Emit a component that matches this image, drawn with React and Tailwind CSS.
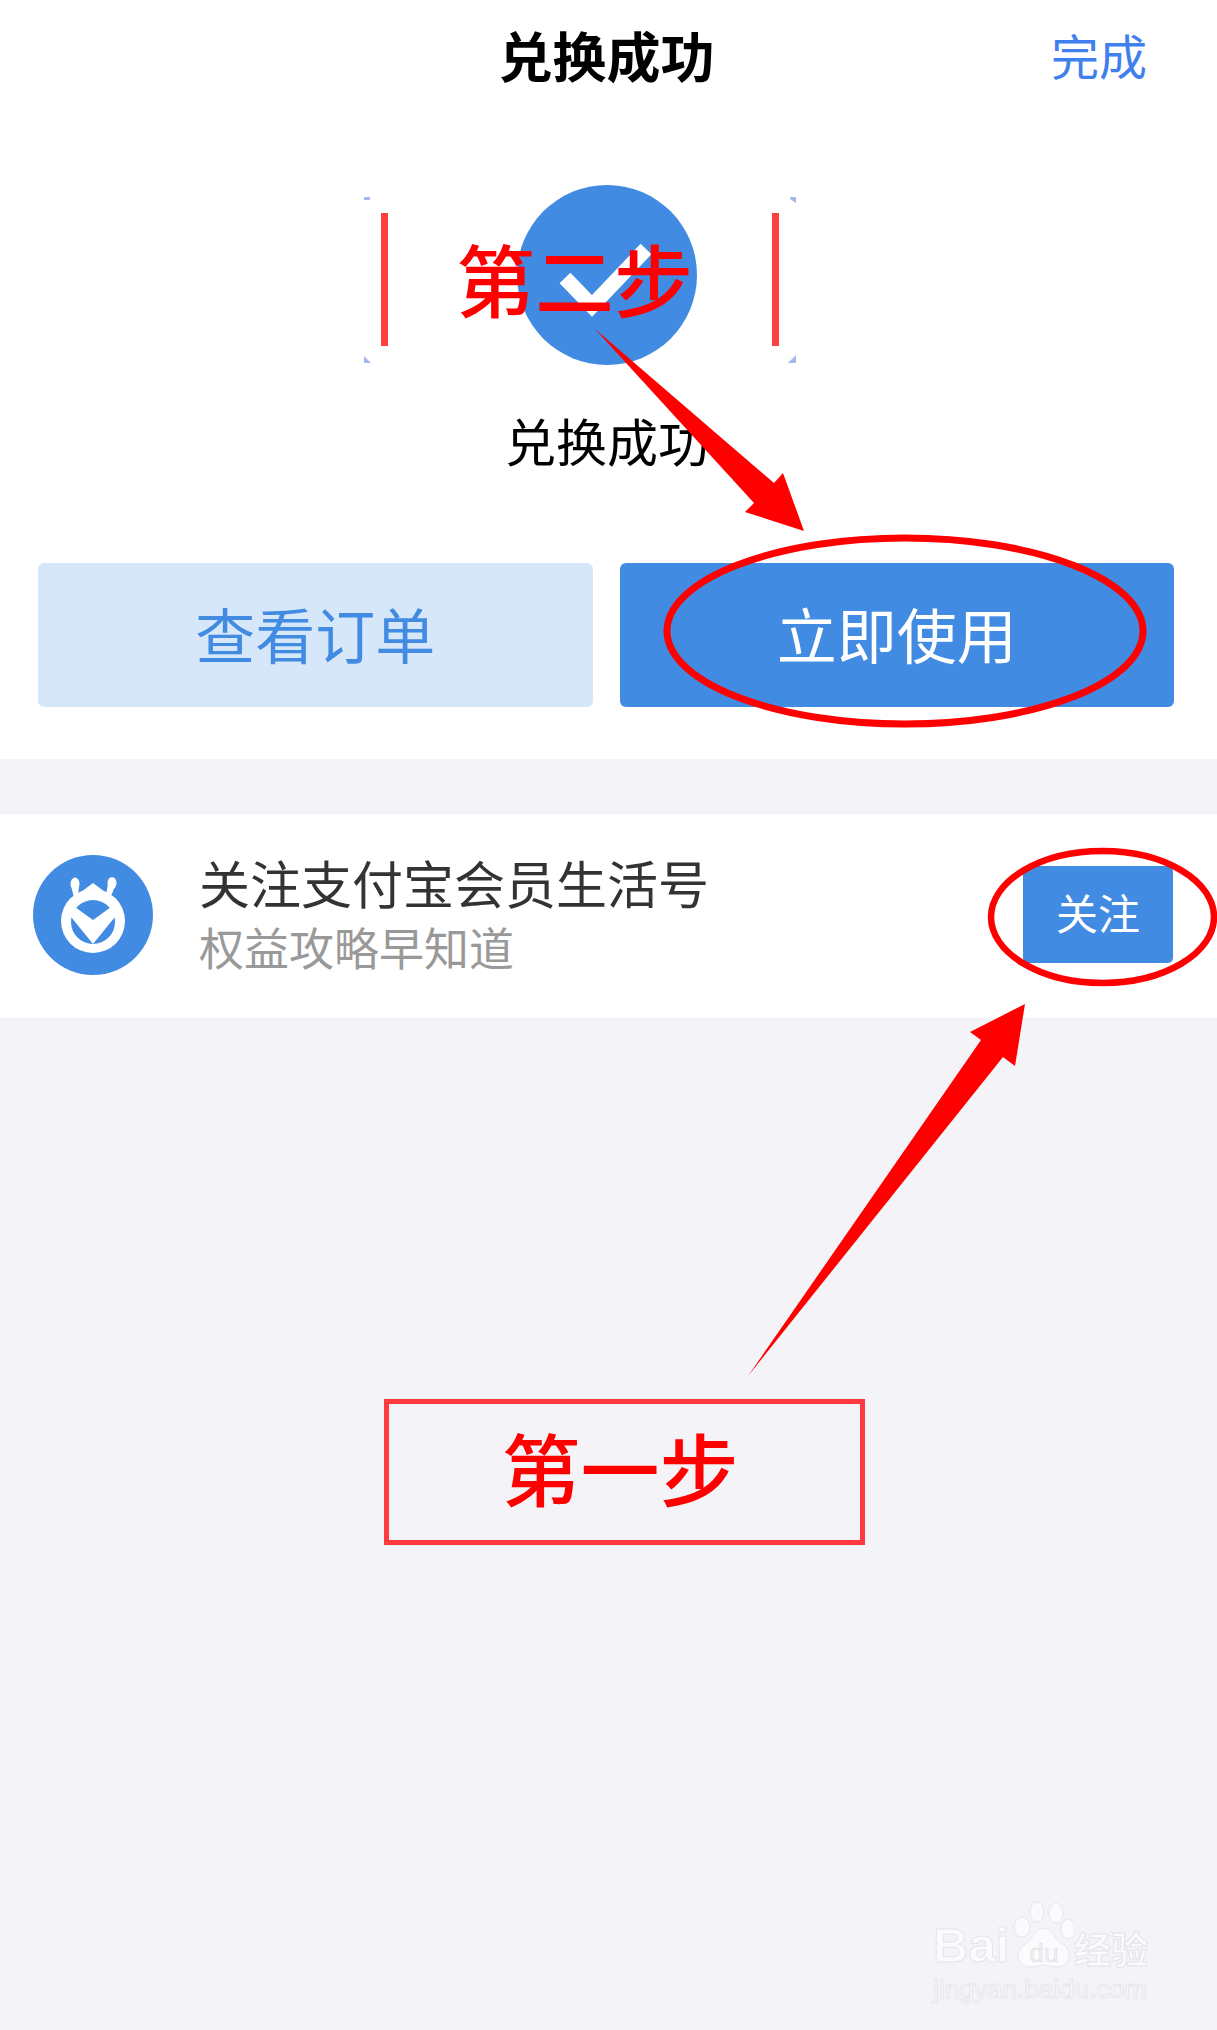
import React from "react";

const cjk = "font-['Noto_Sans_CJK_SC','Noto_Sans',sans-serif]";

function CheckBadge() {
  return (
    <div className="w-[180px] h-[180px] rounded-full bg-[#418be2] mx-auto">
      <svg width="180" height="180" viewBox="0 0 180 180">
        <path d="M48 93 L75 121 L129 64" fill="none" stroke="#fff" strokeWidth="15" />
      </svg>
    </div>
  );
}

function VipLogo() {
  return (
    <svg width="120" height="120" viewBox="0 0 120 120" className="shrink-0">
      <circle cx="60" cy="60" r="60" fill="#418be2" />
      <g fill="#fff">
        <ellipse cx="42" cy="29" rx="4.5" ry="6.5" />
        <path d="M38 30 L41 43 L45 42 L46 30 Z" />
        <ellipse cx="79" cy="28" rx="4.5" ry="6" />
        <path d="M75 29 L73 40 L78 41 L83 29 Z" />
        <path d="M60 28 L36 46 L84 46 Z" />
        <circle cx="60" cy="66" r="32" />
      </g>
      <circle cx="60" cy="67" r="22" fill="#418be2" />
      <polygon
        points="35,47 60,65 85,47 86,57 60,89 34,57"
        fill="#fff"
      />
    </svg>
  );
}

function Annotations() {
  return (
    <svg
      className="absolute left-0 top-0 pointer-events-none"
      width="1217"
      height="2030"
      viewBox="0 0 1217 2030"
    >
      <rect x="381" y="213" width="7" height="133" fill="#ff4040" />
      <rect x="772" y="213" width="7" height="133" fill="#ff4040" />
      <g fill="#a9b6ee">
        <path d="M364 197 h6 v3 h-6 Z" />
        <path d="M796 197 v6 l-6 -4 v-2 Z" />
        <path d="M364 363 v-7 l7 7 Z" />
        <path d="M796 363 v-8 l-8 8 Z" />
      </g>
      <polygon
        points="595,329 774,483 783,473 804,531 745,512 754,503"
        fill="#ff0000"
      />
      <ellipse cx="905" cy="631" rx="238" ry="93" fill="none" stroke="#ff0000" strokeWidth="7" />
      <ellipse cx="1102.5" cy="917" rx="111.5" ry="66" fill="none" stroke="#ff0000" strokeWidth="6.5" />
      <polygon
        points="748,1376 981,1040 970,1032 1025,1004 1015,1066 1003,1057"
        fill="#ff0000"
      />
    </svg>
  );
}

function Watermark() {
  return (
    <div className="absolute left-[933px] top-[1900px] w-[220px] h-[104px]">
      <div className="flex items-end h-[70px]">
        <span className="font-['Liberation_Sans',sans-serif] font-bold text-[49px] leading-[50px] w-[80px] text-[#fbfbfd] [-webkit-text-stroke:1px_#e4e4ea]">
          Bai
        </span>
        <svg width="60" height="70" viewBox="0 0 60 70" className="shrink-0">
          <g fill="#fbfbfd" stroke="#e6e6ec" strokeWidth="1">
            <ellipse cx="9" cy="27" rx="8" ry="10" />
            <ellipse cx="24" cy="12" rx="7" ry="10" />
            <ellipse cx="43" cy="13" rx="7" ry="10" />
            <ellipse cx="55" cy="29" rx="7" ry="10" />
            <path d="M31 28 C40 28 41 40 50 44 C60 50 58 67 44 67 C38 67 35 65 31 65 C27 65 23 67 17 67 C4 67 1 52 11 45 C20 40 21 28 31 28 Z" />
          </g>
          <text
            x="31"
            y="62"
            textAnchor="middle"
            fontFamily="Liberation Sans, sans-serif"
            fontSize="26"
            fill="#f1f1f5"
            stroke="#dcdce2"
            strokeWidth="0.6"
          >
            du
          </text>
        </svg>
        <span className={`${cjk} font-bold text-[37px] leading-[44px] ml-[1px] whitespace-nowrap text-[#fbfbfd] [-webkit-text-stroke:1px_#e4e4ea]`}>
          经验
        </span>
      </div>
      <div className="font-['Liberation_Sans',sans-serif] text-[26.5px] leading-[30px] mt-[4px] whitespace-nowrap text-[#fbfbfd] [-webkit-text-stroke:1px_#e6e6ec]">
        jingyan.baidu.com
      </div>
    </div>
  );
}

export default function App() {
  return (
    <div className={`${cjk} relative w-[1217px] h-[2030px] overflow-hidden bg-[#f3f3f8]`}>
      <div className="bg-white">
        <div className="grid grid-cols-[1fr_auto_1fr] items-center h-[114px] pb-[5px]">
          <div />
          <h1 className="mr-[4px] text-[54px] leading-[60px] font-bold text-black">兑换成功</h1>
          <div className="justify-self-end pr-[70px] pb-[2px] text-[48px] leading-[60px] text-[#3f80ee]">
            完成
          </div>
        </div>

        <div className="pt-[71px] pr-[3px]">
          <CheckBadge />
        </div>
        <p className="mt-[45px] pr-[3px] text-center text-[51px] leading-[60px] text-black">兑换成功</p>

        <div className="grid grid-cols-2 gap-[27px] pl-[38px] pr-[43px] mt-[93px] pb-[52px]">
          <button className="h-[144px] pb-[5px] rounded-[6px] bg-[#d5e7f9] text-[#418be2] text-[60px] leading-none">
            查看订单
          </button>
          <button className="h-[144px] pb-[5px] rounded-[6px] bg-[#418be2] text-white text-[60px] leading-none">
            立即使用
          </button>
        </div>
      </div>

      <div className="flex items-start mt-[55px] h-[204px] bg-white pl-[33px] pr-[44px]">
        <div className="pt-[41px]">
          <VipLogo />
        </div>
        <div className="flex-1 ml-[46px] pt-[37px]">
          <div className="text-[51px] leading-[62px] text-[#333333]">关注支付宝会员生活号</div>
          <div className="text-[45px] leading-[68px] text-[#999999]">权益攻略早知道</div>
        </div>
        <button className="mt-[52px] pb-[6px] w-[150px] h-[97px] rounded-[5px] bg-[#418be2] text-white text-[42px] leading-none">
          关注
        </button>
      </div>

      <Annotations />

      <div className="absolute left-[456px] top-[223px] text-[79px] leading-[110px] font-medium text-[#ff0000] whitespace-nowrap">
        第二步
      </div>

      <div className="absolute left-[384px] top-[1399px] w-[481px] h-[146px] pb-[12px] pr-[9px] border-[5px] border-[#ff3b3f] flex items-center justify-center text-[79px] leading-none font-medium text-[#ff0000] whitespace-nowrap">
        第一步
      </div>

      <Watermark />
    </div>
  );
}
